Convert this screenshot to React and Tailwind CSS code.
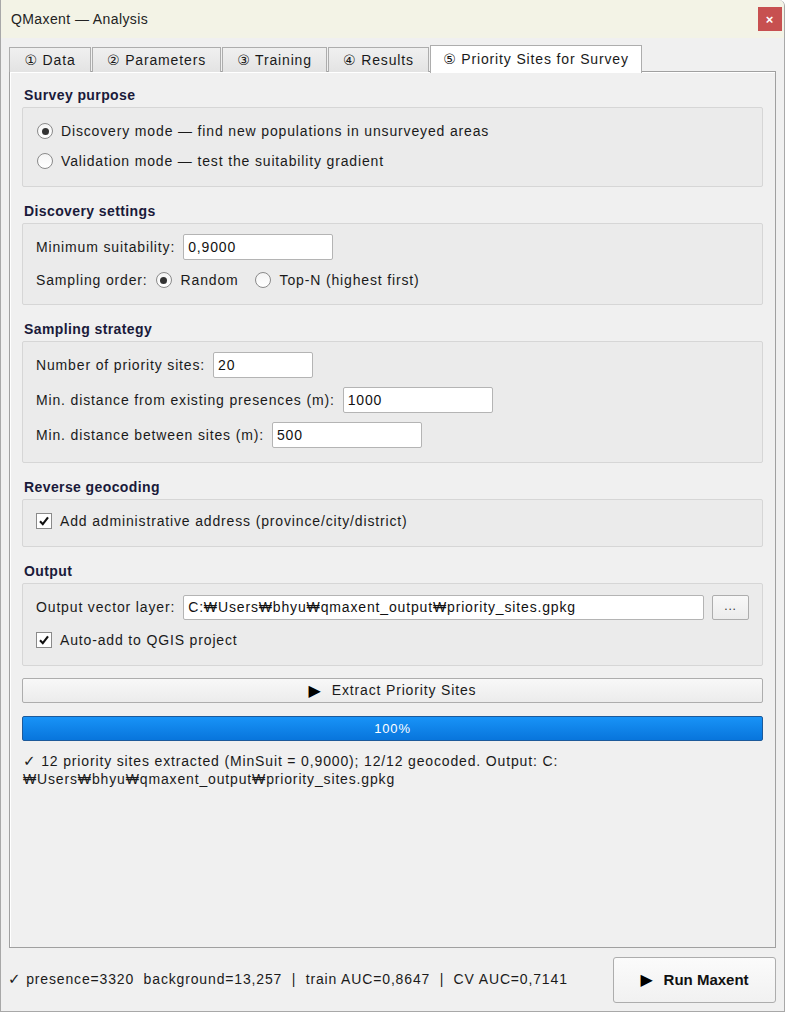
import React from "react";

const font = "font-['Liberation_Sans','DejaVu_Sans',sans-serif]";

const Radio = ({ checked }) => (
  <span className="w-[16px] h-[16px] rounded-full border border-[#8a8a8a] bg-gradient-to-b from-[#f4f4f4] to-[#ffffff] flex items-center justify-center shrink-0">
    {checked && <span className="w-[7px] h-[7px] rounded-full bg-[#333]" />}
  </span>
);

const Check = () => (
  <span className="w-[16px] h-[16px] border border-[#8a8a8a] bg-white flex items-center justify-center shrink-0">
    <svg width="12" height="12" viewBox="0 0 12 12">
      <path d="M2 6.2 L4.8 9.2 L10 2.4" fill="none" stroke="#111" strokeWidth="2.1" />
    </svg>
  </span>
);

const Field = ({ value, w }) => (
  <div className={`${w} h-[26px] bg-white border border-[#b4b4b4] rounded-[2px] flex items-center pl-[4px] text-[14px] text-[#111]`}>
    {value}
  </div>
);

const Header = ({ children, first }) => (
  <div className={`${first ? "" : "mt-[14px]"} h-[20px] leading-[20px] mb-[2px] pl-[2px] text-[14px] font-bold text-[#1a1a3a] tracking-[0.4px]`}>
    {children}
  </div>
);

const Box = ({ children, className }) => (
  <div className={`border border-[#d6d6d6] rounded-[2px] bg-[#ebebeb] px-[13px] ${className}`}>{children}</div>
);

const tabs = [
  { label: "① Data", w: "w-[82px]" },
  { label: "② Parameters", w: "w-[129px]" },
  { label: "③ Training", w: "w-[105px]" },
  { label: "④ Results", w: "w-[101px]" },
];

export default function App() {
  return (
    <div className={`w-[787px] h-[1013px] bg-white ${font} text-[14px] tracking-[0.85px] text-[#1a1a1a]`}>
      <div className="w-[785px] h-[1012px] bg-[#f0f0f0] border-l border-r border-b border-[#a8a8a8] rounded-tr-[6px] flex flex-col">

        {/* TITLE BAR */}
        <div className="h-[38px] bg-[#f3f3e6] flex items-center justify-between pl-[10px] pr-[2px] rounded-tr-[6px]">
          <span className="text-[14px] tracking-[0.4px] text-[#222]">QMaxent — Analysis</span>
          <div className="w-[24px] h-[24px] bg-[#c75050] flex items-center justify-center text-white font-bold text-[13px] leading-none">×</div>
        </div>

        {/* TABS */}
        <div className="px-[8px] pt-[7px] flex items-end relative z-10">
          {tabs.map((t) => (
            <div
              key={t.label}
              className={`${t.w} h-[25px] mr-[1px] border border-b-0 border-[#adadad] bg-gradient-to-b from-[#f0f0f0] to-[#e3e3e3] flex items-center justify-center text-[14px] text-[#1a1a1a]`}
            >
              {t.label}
            </div>
          ))}
          <div className="w-[212px] h-[28px] border border-b-0 border-[#adadad] bg-white flex items-center justify-center text-[14px] text-[#1a1a1a] -mb-[1px]">
            ⑤ Priority Sites for Survey
          </div>
        </div>

        {/* PANE */}
        <div className="mx-[8px] -mt-[1px] h-[877px] border border-[#a0a0a0] bg-[#f0f0f0] shadow-[inset_1px_1px_0_#ffffff] px-[12px] pt-[13px]">

          <Header first>Survey purpose</Header>
          <Box className="pt-[8px] pb-[10px] pl-[14px]">
            <div className="h-[30px] flex items-center gap-[8px]">
              <Radio checked />
              <span>Discovery mode — find new populations in unsurveyed areas</span>
            </div>
            <div className="h-[30px] flex items-center gap-[8px]">
              <Radio />
              <span>Validation mode — test the suitability gradient</span>
            </div>
          </Box>

          <Header>Discovery settings</Header>
          <Box className="pt-[10px] pb-[11px]">
            <div className="h-[26px] flex items-center gap-[8px]">
              <span>Minimum suitability:</span>
              <Field value="0,9000" w="w-[150px]" />
            </div>
            <div className="h-[26px] mt-[7px] flex items-center">
              <span>Sampling order:</span>
              <span className="ml-[8px]"><Radio checked /></span>
              <span className="ml-[9px]">Random</span>
              <span className="ml-[16px]"><Radio /></span>
              <span className="ml-[9px]">Top-N (highest first)</span>
            </div>
          </Box>

          <Header>Sampling strategy</Header>
          <Box className="pt-[10px] pb-[14px] flex flex-col gap-[9px]">
            <div className="h-[26px] flex items-center gap-[8px]">
              <span>Number of priority sites:</span>
              <Field value="20" w="w-[100px]" />
            </div>
            <div className="h-[26px] flex items-center gap-[8px]">
              <span>Min. distance from existing presences (m):</span>
              <Field value="1000" w="w-[150px]" />
            </div>
            <div className="h-[26px] flex items-center gap-[8px]">
              <span>Min. distance between sites (m):</span>
              <Field value="500" w="w-[150px]" />
            </div>
          </Box>

          <Header>Reverse geocoding</Header>
          <Box className="pt-[10px] pb-[14px]">
            <div className="h-[22px] flex items-center gap-[8px]">
              <Check />
              <span>Add administrative address (province/city/district)</span>
            </div>
          </Box>

          <Header>Output</Header>
          <Box className="pt-[11px] pb-[15px]">
            <div className="h-[25px] flex items-center">
              <span>Output vector layer:</span>
              <div className="ml-[8px] flex-1 h-[25px] bg-white border border-[#b4b4b4] rounded-[2px] flex items-center pl-[4px] text-[#111]">
                C:₩Users₩bhyu₩qmaxent_output₩priority_sites.gpkg
              </div>
              <div className="ml-[8px] w-[37px] h-[25px] border border-[#adadad] rounded-[2px] bg-gradient-to-b from-[#f8f8f8] to-[#ececec] flex items-center justify-center text-[12px] text-[#333] pb-[4px]">
                ...
              </div>
            </div>
            <div className="h-[20px] mt-[10px] flex items-center gap-[8px]">
              <Check />
              <span>Auto-add to QGIS project</span>
            </div>
          </Box>

          <div className="mt-[12px] h-[25px] border border-[#adadad] rounded-[2px] bg-gradient-to-b from-[#f8f8f8] to-[#ececec] flex items-center justify-center gap-[10px]">
            <span className="text-[16px] leading-none text-black">▶</span>
            <span>Extract Priority Sites</span>
          </div>

          <div className="mt-[13px] h-[25px] border border-[#1d5a9a] rounded-[2px] bg-gradient-to-b from-[#1893f7] to-[#0875dc] flex items-center justify-center text-white text-[13px]">
            100%
          </div>

          <div className="mt-[11px] leading-[18px] pl-[1px]">
            <span className="text-[15px] font-bold">✓</span> 12 priority sites extracted (MinSuit = 0,9000); 12/12 geocoded. Output: C:
            <br />
            ₩Users₩bhyu₩qmaxent_output₩priority_sites.gpkg
          </div>
        </div>

        {/* BOTTOM BAR */}
        <div className="flex-1 flex items-start justify-between pl-[7px] pr-[8px] pt-[9px]">
          <div className="h-[45px] flex items-center whitespace-pre">
            <span className="text-[15px] font-bold">✓</span> presence=3320  background=13,257  |  train AUC=0,8647  |  CV AUC=0,7141
          </div>
          <div className="w-[163px] h-[46px] border border-[#adadad] rounded-[3px] bg-gradient-to-b from-[#fbfbfb] to-[#f1f1f1] flex items-center justify-center gap-[10px]">
            <span className="text-[16px] leading-none text-black">▶</span>
            <span className="text-[15px] font-bold tracking-normal text-[#111]">Run Maxent</span>
          </div>
        </div>
      </div>
    </div>
  );
}
